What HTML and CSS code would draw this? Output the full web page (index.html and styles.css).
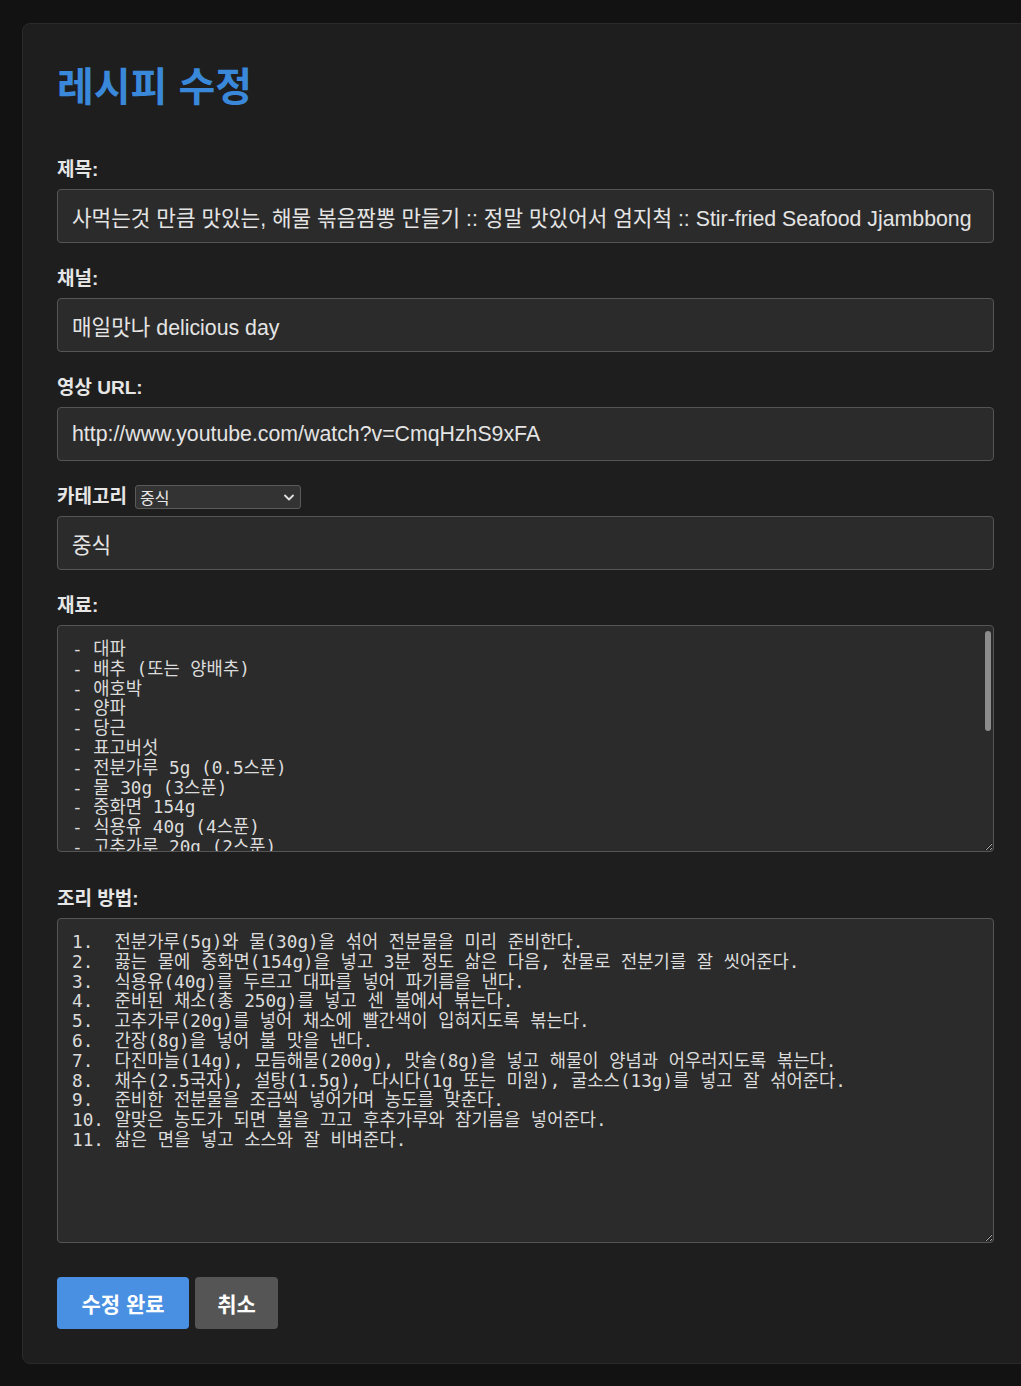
FILE: index.html
```html
<!DOCTYPE html>
<html lang="ko">
<head>
  <meta charset="UTF-8" />
  <meta name="viewport" content="width=device-width, initial-scale=1.0"/>
  <title>레시피 수정</title>
  <link rel="stylesheet" href="styles.css">
</head>
<body>

<div class="card">
  <h1>레시피 수정</h1>

  <form class="recipe-form" onsubmit="return false">
    <div class="field">
      <label for="title">제목:</label>
      <input type="text" id="title" value="사먹는것 만큼 맛있는, 해물 볶음짬뽕 만들기 :: 정말 맛있어서 엄지척 :: Stir-fried Seafood Jjambbong">
    </div>

    <div class="field">
      <label for="channel">채널:</label>
      <input type="text" id="channel" value="매일맛나 delicious day">
    </div>

    <div class="field">
      <label for="url">영상 URL:</label>
      <input type="text" id="url" value="http://www.youtube.com/watch?v=CmqHzhS9xFA">
    </div>

    <div class="field">
      <div class="category-row">
        <label for="categorySelect">카테고리</label>
        <div class="select-wrap">
          <select id="categorySelect">
            <option>한식</option>
            <option selected>중식</option>
            <option>일식</option>
            <option>양식</option>
          </select>
          <svg class="chevron" width="10" height="7" viewBox="0 0 10 7"><path d="M1 1.5 L5 5.5 L9 1.5" fill="none" stroke="#e0e0e0" stroke-width="1.8" stroke-linecap="round" stroke-linejoin="round"/></svg>
        </div>
      </div>
      <input type="text" id="category" value="중식">
    </div>

    <div class="field field-area">
      <label for="ingredients">재료:</label>
      <div class="area-wrap">
        <textarea id="ingredients" class="ingredients">- 대파
- 배추 (또는 양배추)
- 애호박
- 양파
- 당근
- 표고버섯
- 전분가루 5g (0.5스푼)
- 물 30g (3스푼)
- 중화면 154g
- 식용유 40g (4스푼)
- 고추가루 20g (2스푼)
- 간장 8g
- 다진마늘 14g
- 모듬해물 200g
- 맛술 8g
- 채수 2.5국자
- 설탕 1.5g
- 다시다 1g (또는 미원)
- 굴소스 13g
- 후추가루 약간
- 참기름 약간
- 소금 약간</textarea>
        <span class="scroll-thumb"></span>
      </div>
    </div>

    <div class="field field-steps">
      <label for="steps">조리 방법:</label>
      <textarea id="steps" class="steps">1.  전분가루(5g)와 물(30g)을 섞어 전분물을 미리 준비한다.
2.  끓는 물에 중화면(154g)을 넣고 3분 정도 삶은 다음, 찬물로 전분기를 잘 씻어준다.
3.  식용유(40g)를 두르고 대파를 넣어 파기름을 낸다.
4.  준비된 채소(총 250g)를 넣고 센 불에서 볶는다.
5.  고추가루(20g)를 넣어 채소에 빨간색이 입혀지도록 볶는다.
6.  간장(8g)을 넣어 불 맛을 낸다.
7.  다진마늘(14g), 모듬해물(200g), 맛술(8g)을 넣고 해물이 양념과 어우러지도록 볶는다.
8.  채수(2.5국자), 설탕(1.5g), 다시다(1g 또는 미원), 굴소스(13g)를 넣고 잘 섞어준다.
9.  준비한 전분물을 조금씩 넣어가며 농도를 맞춘다.
10. 알맞은 농도가 되면 불을 끄고 후추가루와 참기름을 넣어준다.
11. 삶은 면을 넣고 소스와 잘 비벼준다.</textarea>
    </div>

    <div class="actions">
      <button type="submit" class="btn-save">수정 완료</button>
      <button type="button" class="btn-cancel" onclick="history.back()">취소</button>
    </div>
  </form>
</div>

<script>
const select = document.getElementById("categorySelect");
select.addEventListener("change", () => {
  document.getElementById("category").value = select.value;
});
</script>

</body>
</html>
```

FILE: styles.css
```css
html {
  overflow: hidden;
}

body {
  margin: 0;
  padding: 23px 0 0 22px;
  background: #121212;
  color: #e0e0e0;
  font-family: "Liberation Sans", "Noto Sans CJK KR", sans-serif;
}

.card {
  width: 937px;
  padding: 34px 34px 34px 34px;
  background: #1e1e1e;
  border: 1px solid #2a2a2a;
  border-radius: 8px;
}

.card h1 {
  margin: 0 0 41px;
  font-size: 40px;
  line-height: 58px;
  font-weight: bold;
  color: #3a88da;
}

.field {
  margin-bottom: 23px;
}

.field-area {
  margin-bottom: 34px;
}

.field-steps {
  margin-bottom: 34px;
}

.field label {
  display: block;
  margin-bottom: 6px;
  font-size: 19px;
  line-height: 26px;
  font-weight: bold;
  color: #e6e6e6;
}

.field input,
.field textarea {
  display: block;
  box-sizing: border-box;
  width: 100%;
  background: #2b2b2b;
  color: #e4e4e4;
  border: 1px solid #555;
  border-radius: 4px;
  outline: none;
}

.field input {
  height: 54px;
  padding: 0 14px;
  font-family: "Liberation Sans", "Noto Sans CJK KR", sans-serif;
  font-size: 21.3px;
}

.field textarea {
  padding: 14px 14px;
  font-family: "DejaVu Sans Mono", "Noto Sans Mono CJK KR", "Noto Sans CJK KR", monospace;
  font-size: 17.7px;
  line-height: 19.8px;
  color: #dcdcdc;
  white-space: pre;
  overflow: hidden;
}

.area-wrap {
  position: relative;
}

.ingredients {
  height: 227px;
}

.steps {
  height: 325px;
}

.scroll-thumb {
  position: absolute;
  top: 6px;
  right: 3px;
  width: 6px;
  height: 100px;
  background: #8c8c8c;
  border-radius: 3px;
}

.category-row {
  display: flex;
  align-items: center;
  gap: 8px;
  margin-bottom: 6px;
  height: 26px;
}

.category-row label {
  display: inline;
  margin: 0;
}

.select-wrap {
  position: relative;
}

.select-wrap select {
  appearance: none;
  -webkit-appearance: none;
  display: block;
  width: 166px;
  height: 24px;
  padding: 0 20px 0 4px;
  background: #333;
  color: #e8e8e8;
  border: 1px solid #5a5a5a;
  border-radius: 3px;
  font-family: "Noto Sans CJK KR", sans-serif;
  font-size: 16px;
  line-height: 20px;
  outline: none;
}

.chevron {
  position: absolute;
  right: 7px;
  top: 9px;
  pointer-events: none;
}

.actions {
  display: flex;
  gap: 6px;
}

.actions button {
  height: 52px;
  border: none;
  border-radius: 4px;
  font-family: "Noto Sans CJK KR", sans-serif;
  font-size: 21px;
  font-weight: bold;
  color: #fff;
  cursor: pointer;
}

.btn-save {
  width: 132px;
  background: #4a90e2;
}

.btn-cancel {
  width: 83px;
  background: #555;
  color: #eee;
}
```
